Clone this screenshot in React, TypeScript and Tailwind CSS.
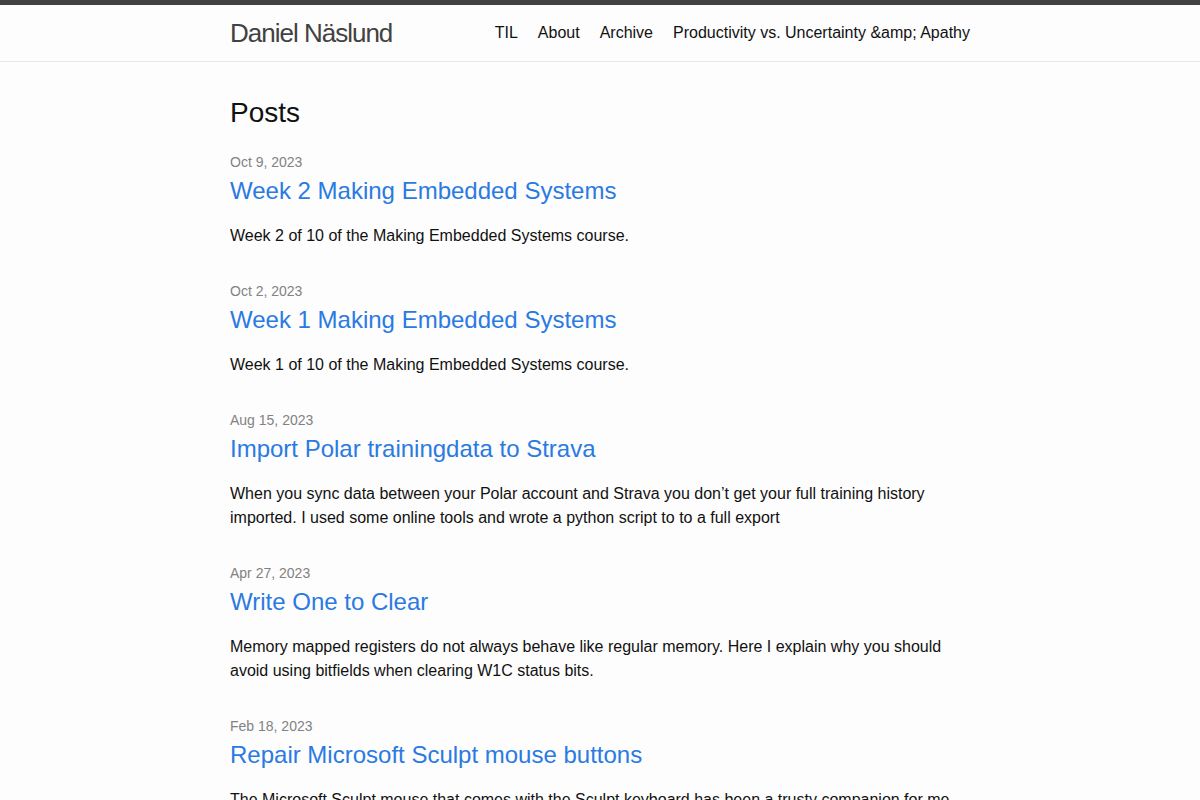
const posts = [
  {
    date: "Oct 9, 2023",
    title: "Week 2 Making Embedded Systems",
    excerpt: "Week 2 of 10 of the Making Embedded Systems course.",
  },
  {
    date: "Oct 2, 2023",
    title: "Week 1 Making Embedded Systems",
    excerpt: "Week 1 of 10 of the Making Embedded Systems course.",
  },
  {
    date: "Aug 15, 2023",
    title: "Import Polar trainingdata to Strava",
    excerpt:
      "When you sync data between your Polar account and Strava you don’t get your full training history imported. I used some online tools and wrote a python script to to a full export",
  },
  {
    date: "Apr 27, 2023",
    title: "Write One to Clear",
    excerpt:
      "Memory mapped registers do not always behave like regular memory. Here I explain why you should avoid using bitfields when clearing W1C status bits.",
  },
  {
    date: "Feb 18, 2023",
    title: "Repair Microsoft Sculpt mouse buttons",
    excerpt:
      "The Microsoft Sculpt mouse that comes with the Sculpt keyboard has been a trusty companion for me for many years, but eventually the left button started to double click.",
  },
];

const navLinks = ["TIL", "About", "Archive", "Productivity vs. Uncertainty &amp; Apathy"];

export default function App() {
  return (
    <div className="min-h-screen bg-[#fdfdfd] text-[#111] font-['Liberation_Sans',Arial,sans-serif] text-base leading-6">
      <header className="border-t-[5px] border-t-[#424242] border-b border-b-[#e8e8e8] min-h-[62px] flex items-center">
        <div className="w-full max-w-[740px] mx-auto flex items-center justify-between">
          <a href="#" className="text-[26px] leading-[54px] tracking-[-1px] font-light text-[#424242]">
            Daniel Näslund
          </a>
          <nav className="flex leading-[54px] -mt-px">
            {navLinks.map((link) => (
              <a key={link} href="#" className="ml-5 text-[#111]">
                {link}
              </a>
            ))}
          </nav>
        </div>
      </header>

      <main className="max-w-[740px] mx-auto pt-[30px]">
        <h2 className="text-[28px] leading-[42px] mb-[17px]">Posts</h2>
        <ul>
          {posts.map((post) => (
            <li key={post.title} className="mb-[32px]">
              <span className="block text-sm leading-[22px] text-[#828282]">{post.date}</span>
              <h3 className="mb-[15px]">
                <a href="#" className="block text-2xl leading-9 text-[#2a7ae2]">
                  {post.title}
                </a>
              </h3>
              <p>{post.excerpt}</p>
            </li>
          ))}
        </ul>
      </main>
    </div>
  );
}
